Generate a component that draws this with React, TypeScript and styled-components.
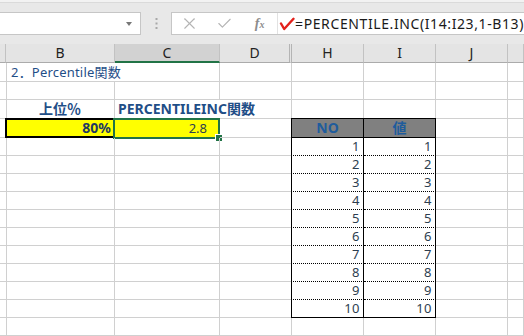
import React from "react";
import styled, { createGlobalStyle } from "styled-components";
import { X, Check } from "lucide-react";

const GlobalStyle = createGlobalStyle`
  html, body {
    margin: 0;
    padding: 0;
    background: #ffffff;
    overflow: hidden;
  }
  body {
    font-family: "Noto Sans", "Noto Sans CJK JP", sans-serif;
  }
`;

const COLS = "6px 109px 105px 72px 72px 72px 72px 1fr";
const ROWS = "19px 18px 19px 19px repeat(12, 18px)";

const BLUE = "#1f4e87";
const INK = "#2d3e50";
const GREEN = "#217346";
const GRID = "#d0d0d0";

const Page = styled.div`
  width: 524px;
  height: 336px;
  overflow: hidden;
  background: #fff;
`;

/* ---------- formula bar ---------- */

const Toolbar = styled.div`
  height: 44px;
  box-sizing: border-box;
  background: #e8e8e8;
  border-top: 2px solid #f2f2f2;
  box-shadow: inset 0 1px #dadada;
  padding-top: 10px;
  display: flex;
  align-items: flex-start;
`;

const NameBox = styled.div`
  width: 145px;
  height: 23px;
  box-sizing: border-box;
  background: #fff;
  border: 1px solid #c6c6c6;
  border-left: none;
  display: flex;
  align-items: center;
  justify-content: flex-end;
  padding-right: 8px;
`;

const DropArrow = styled.span`
  width: 0;
  height: 0;
  border-left: 3px solid transparent;
  border-right: 3px solid transparent;
  border-top: 4px solid #777;
`;

const Grip = styled.div`
  width: 31px;
  height: 23px;
  display: flex;
  align-items: center;
  justify-content: center;
`;

const FormulaBox = styled.div`
  flex: 1;
  height: 23px;
  box-sizing: border-box;
  background: #fff;
  border: 1px solid #c6c6c6;
  border-right: none;
  display: flex;
  align-items: center;
`;

const BarButton = styled.div`
  width: 35px;
  height: 21px;
  display: flex;
  align-items: center;
  justify-content: center;
  color: #b4b4b4;
`;

const Fx = styled.span`
  font-family: "Liberation Serif", serif;
  font-style: italic;
  font-weight: bold;
  font-size: 14px;
  color: #8c8c8c;
  small {
    font-size: 10px;
  }
`;

const FormulaInput = styled.div`
  flex: 1;
  height: 21px;
  border-left: 1px solid #e2e2e2;
  display: flex;
  align-items: center;
`;

const FormulaText = styled.span`
  font-size: 14px;
  letter-spacing: 0.6px;
  color: #1a1a1a;
  white-space: nowrap;
`;

/* ---------- column headers ---------- */

const HeaderRow = styled.div`
  display: grid;
  grid-template-columns: ${COLS};
  height: 19px;
  background: #e4e4e4;
`;

const ColHead = styled.div<{ $selected?: boolean; $hiddenAfter?: boolean }>`
  box-sizing: border-box;
  border-right: ${({ $hiddenAfter }) =>
    $hiddenAfter ? "3px double #b4b4b4" : "1px solid #c2c2c2"};
  border-bottom: ${({ $selected }) =>
    $selected ? `2px solid ${GREEN}` : "1px solid #ababab"};
  background: ${({ $selected }) => ($selected ? "#d2d2d2" : "transparent")};
  display: flex;
  align-items: flex-end;
  justify-content: center;
  font-size: 14px;
  line-height: 1;
  color: #222;
  padding-bottom: ${({ $selected }) => ($selected ? "1px" : "2px")};
`;

/* ---------- sheet ---------- */

const Sheet = styled.div`
  display: grid;
  grid-template-columns: ${COLS};
  grid-template-rows: ${ROWS};
`;

const Cell = styled.div<{ $span?: number; $align?: "left" | "right" | "center" }>`
  grid-column: span ${({ $span }) => $span ?? 1};
  box-sizing: border-box;
  position: relative;
  min-width: 0;
  border-right: 1px solid ${GRID};
  border-bottom: 1px solid ${GRID};
  display: flex;
  align-items: flex-end;
  justify-content: ${({ $align }) =>
    $align === "right" ? "flex-end" : $align === "center" ? "center" : "flex-start"};
  padding: 0 3px 2px;
  white-space: nowrap;
  line-height: 1;
`;

const Title = styled.span`
  font-size: 13px;
  letter-spacing: 0.2px;
  color: ${BLUE};
  padding-left: 2px;
`;

const Heading = styled.span`
  font-size: 14px;
  font-weight: bold;
  color: ${BLUE};
`;

const KeyCell = styled(Cell)`
  background: #ffff00;
  margin: -1px 0 0 -1px;
  border: 2px solid #000;
  padding-right: 2px;
  padding-bottom: 1px;
  font-size: 14px;
  font-weight: bold;
  color: #1f3a60;
`;

const ResultCell = styled(Cell)`
  background: #ffff00;
  padding-right: 12px;
  font-size: 13px;
  color: ${INK};
`;

const Selection = styled.div`
  position: absolute;
  left: -2px;
  top: -1px;
  right: -1px;
  bottom: -2px;
  border: 2px solid ${GREEN};
  pointer-events: none;
`;

const Handle = styled.div`
  position: absolute;
  right: -5px;
  bottom: -5px;
  width: 6px;
  height: 6px;
  background: ${GREEN};
  border: 1px solid #fff;
`;

const TableHead = styled(Cell)<{ $first?: boolean }>`
  background: #808080;
  margin-top: -1px;
  margin-left: ${({ $first }) => ($first ? "-1px" : "0")};
  border-top: 1px solid #000;
  border-left: ${({ $first }) => ($first ? "1px solid #000" : "none")};
  border-right: 1px solid #000;
  border-bottom: 1px solid #000;
  font-size: 14px;
  font-weight: bold;
  color: #1f5c9c;
`;

const TableData = styled(Cell)<{ $first?: boolean; $last?: boolean }>`
  margin-left: ${({ $first }) => ($first ? "-1px" : "0")};
  border-left: ${({ $first }) => ($first ? "1px solid #000" : "none")};
  border-right: 1px solid #000;
  border-bottom: 1px ${({ $last }) => ($last ? "solid" : "dotted")} #000;
  font-size: 13px;
  letter-spacing: 0.5px;
  color: ${INK};
  padding-right: 3px;
`;

const Blank = () => <Cell />;

const RedCheck = () => (
  <svg width="16" height="14" viewBox="0 0 16 14" style={{ marginLeft: 1 }}>
    <path
      d="M2 6.5 L5.2 12 L14.5 1.8"
      fill="none"
      stroke="#e3211b"
      strokeWidth="2.4"
      strokeLinecap="round"
      strokeLinejoin="round"
    />
  </svg>
);

const GripDots = () => (
  <svg width="3" height="11" viewBox="0 0 3 11">
    <rect x="0.5" y="0" width="2" height="2" fill="#a8a8a8" />
    <rect x="0.5" y="4.5" width="2" height="2" fill="#a8a8a8" />
    <rect x="0.5" y="9" width="2" height="2" fill="#a8a8a8" />
  </svg>
);

const values = [1, 2, 3, 4, 5, 6, 7, 8, 9, 10];

export default function App() {
  return (
    <Page>
      <GlobalStyle />
      <Toolbar>
        <NameBox>
          <DropArrow />
        </NameBox>
        <Grip>
          <GripDots />
        </Grip>
        <FormulaBox>
          <BarButton>
            <X size={19} strokeWidth={1.4} />
          </BarButton>
          <BarButton>
            <Check size={17} strokeWidth={1.6} />
          </BarButton>
          <BarButton>
            <Fx>
              f<small>x</small>
            </Fx>
          </BarButton>
          <FormulaInput>
            <RedCheck />
            <FormulaText>=PERCENTILE.INC(I14:I23,1-B13)</FormulaText>
          </FormulaInput>
        </FormulaBox>
      </Toolbar>

      <HeaderRow>
        <ColHead />
        <ColHead>B</ColHead>
        <ColHead $selected>C</ColHead>
        <ColHead $hiddenAfter>D</ColHead>
        <ColHead>H</ColHead>
        <ColHead>I</ColHead>
        <ColHead>J</ColHead>
        <ColHead />
      </HeaderRow>

      <Sheet>
        {/* row: title */}
        <Blank />
        <Cell $span={2}>
          <Title>2．Percentile関数</Title>
        </Cell>
        <Blank />
        <Blank />
        <Blank />
        <Blank />
        <Blank />

        {/* row: empty */}
        {Array.from({ length: 8 }, (_, i) => (
          <Blank key={`e${i}`} />
        ))}

        {/* row: headings */}
        <Blank />
        <Cell $align="center">
          <Heading>上位％</Heading>
        </Cell>
        <Cell $span={2}>
          <Heading>PERCENTILEINC関数</Heading>
        </Cell>
        <Blank />
        <Blank />
        <Blank />
        <Blank />

        {/* row: inputs + table header */}
        <Blank />
        <KeyCell $align="right">80%</KeyCell>
        <ResultCell $align="right">
          2.8
          <Selection>
            <Handle />
          </Selection>
        </ResultCell>
        <Blank />
        <TableHead $first $align="center">
          NO
        </TableHead>
        <TableHead $align="center">値</TableHead>
        <Blank />
        <Blank />

        {values.map((v, i) => (
          <React.Fragment key={v}>
            <Blank />
            <Blank />
            <Blank />
            <Blank />
            <TableData $first $last={i === values.length - 1} $align="right">
              {v}
            </TableData>
            <TableData $last={i === values.length - 1} $align="right">
              {v}
            </TableData>
            <Blank />
            <Blank />
          </React.Fragment>
        ))}

        {Array.from({ length: 16 }, (_, i) => (
          <Blank key={`t${i}`} />
        ))}
      </Sheet>
    </Page>
  );
}
